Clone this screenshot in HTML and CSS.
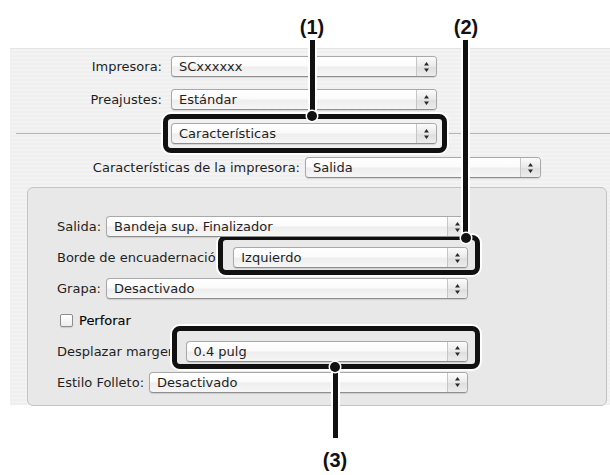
FILE: index.html
```html
<!DOCTYPE html>
<html lang="es">
<head>
    <meta charset="UTF-8">
    <meta name="viewport" content="width=device-width, initial-scale=1.0">
    <title>Características de la impresora</title>
    <link rel="stylesheet" href="styles.css">
</head>
<body>
    <div class="page">
        <div class="sheet">
            <div class="top-form">
                <span class="label">Impresora:</span>
                <div class="popup">
                    <span class="popup-value">SCxxxxxx</span>
                    <span class="stepper"><svg width="7" height="12" viewBox="0 0 7 12"><path d="M1 4.5h5L3.5 1z M1 7.5h5L3.5 11z"/></svg></span>
                </div>

                <span class="label">Preajustes:</span>
                <div class="popup">
                    <span class="popup-value">Estándar</span>
                    <span class="stepper"><svg width="7" height="12" viewBox="0 0 7 12"><path d="M1 4.5h5L3.5 1z M1 7.5h5L3.5 11z"/></svg></span>
                </div>
            </div>

            <div class="divider-row">
                <div class="popup popup-pane">
                    <span class="popup-value">Características</span>
                    <span class="stepper"><svg width="7" height="12" viewBox="0 0 7 12"><path d="M1 4.5h5L3.5 1z M1 7.5h5L3.5 11z"/></svg></span>
                </div>
            </div>

            <div class="feature-row">
                <span class="label">Características de la impresora:</span>
                <div class="popup popup-feature">
                    <span class="popup-value">Salida</span>
                    <span class="stepper"><svg width="7" height="12" viewBox="0 0 7 12"><path d="M1 4.5h5L3.5 1z M1 7.5h5L3.5 11z"/></svg></span>
                </div>
            </div>

            <div class="panel">
                <div class="panel-row">
                    <span class="label">Salida:</span>
                    <div class="popup">
                        <span class="popup-value">Bandeja sup. Finalizador</span>
                        <span class="stepper"><svg width="7" height="12" viewBox="0 0 7 12"><path d="M1 4.5h5L3.5 1z M1 7.5h5L3.5 11z"/></svg></span>
                    </div>
                </div>
                <div class="panel-row">
                    <span class="label">Borde de encuadernación:</span>
                    <div class="popup">
                        <span class="popup-value">Izquierdo</span>
                        <span class="stepper"><svg width="7" height="12" viewBox="0 0 7 12"><path d="M1 4.5h5L3.5 1z M1 7.5h5L3.5 11z"/></svg></span>
                    </div>
                </div>
                <div class="panel-row">
                    <span class="label">Grapa:</span>
                    <div class="popup">
                        <span class="popup-value">Desactivado</span>
                        <span class="stepper"><svg width="7" height="12" viewBox="0 0 7 12"><path d="M1 4.5h5L3.5 1z M1 7.5h5L3.5 11z"/></svg></span>
                    </div>
                </div>
                <div class="panel-row">
                    <label class="checkbox-label"><span class="checkbox"></span>Perforar</label>
                </div>
                <div class="panel-row">
                    <span class="label">Desplazar margen:</span>
                    <div class="popup">
                        <span class="popup-value">0.4 pulg</span>
                        <span class="stepper"><svg width="7" height="12" viewBox="0 0 7 12"><path d="M1 4.5h5L3.5 1z M1 7.5h5L3.5 11z"/></svg></span>
                    </div>
                </div>
                <div class="panel-row">
                    <span class="label">Estilo Folleto:</span>
                    <div class="popup">
                        <span class="popup-value">Desactivado</span>
                        <span class="stepper"><svg width="7" height="12" viewBox="0 0 7 12"><path d="M1 4.5h5L3.5 1z M1 7.5h5L3.5 11z"/></svg></span>
                    </div>
                </div>
            </div>
        </div>

        <!-- callouts drawn over the dialog -->
        <span class="callout-label label-1">(1)</span>
        <span class="callout-label label-2">(2)</span>
        <span class="callout-label label-3">(3)</span>

        <div class="callout-box box-1"></div>
        <div class="callout-box box-2"></div>
        <div class="callout-box box-3"></div>

        <div class="leader leader-1"></div>
        <div class="leader leader-2"></div>
        <div class="leader leader-3"></div>

        <div class="dot dot-1"></div>
        <div class="dot dot-2"></div>
        <div class="dot dot-3"></div>
    </div>
</body>
</html>
```

FILE: styles.css
```css
/* Print dialog, Mac OS X look */
body {
    margin: 0;
    background-color: #fff;
    font-family: "DejaVu Sans", Verdana, sans-serif;
    font-size: 13px;
    color: #1f1f1f;
}

.page {
    position: relative;
    width: 610px;
    height: 475px;
    overflow: hidden;
}

.sheet {
    box-sizing: border-box;
    height: 357px;
    margin: 48px 0 0 10px;
    padding-top: 7px;
    border-top: 1px solid #e4e4e4;
    background: repeating-linear-gradient(#f3f3f3 0 2px, #efefef 2px 4px);
}

.label {
    white-space: nowrap;
    line-height: 21px;
}

/* pop-up buttons */
.popup {
    position: relative;
    z-index: 2;
    display: flex;
    align-items: center;
    height: 21px;
    box-sizing: border-box;
    border: 1px solid #a9a9a9;
    border-bottom-color: #8e8e8e;
    border-radius: 4px;
    background: linear-gradient(#ffffff, #fbfbfb 45%, #eeeeee 55%, #f6f6f6);
    box-shadow: 0 1px 1px rgba(0, 0, 0, 0.12);
}

.popup-value {
    flex: 1;
    padding-left: 7px;
    white-space: nowrap;
    line-height: 19px;
}

.stepper {
    display: flex;
    align-items: center;
    justify-content: center;
    align-self: stretch;
    width: 19px;
    border-left: 1px solid #c6c6c6;
    border-radius: 0 3px 3px 0;
    background: linear-gradient(#fbfbfb, #e9e9e9 50%, #dedede 51%, #ececec);
}

.stepper svg {
    fill: #2a2a2a;
}

/* top part */
.top-form {
    display: grid;
    grid-template-columns: 152px 266px;
    column-gap: 9px;
    row-gap: 12px;
}

.top-form .label {
    text-align: right;
}

.divider-row {
    margin: 13px 0 0 6px;
    padding-left: 155px;
    background: linear-gradient(#b4b4b4, #b4b4b4) 0 50% / 100% 1px no-repeat;
}

.popup-pane {
    width: 266px;
}

.feature-row {
    display: flex;
    justify-content: flex-end;
    gap: 5px;
    width: 531px;
    margin-top: 13px;
}

.popup-feature {
    width: 236px;
}

/* inner box */
.panel {
    box-sizing: border-box;
    height: 219px;
    margin: 9px 3px 0 17px;
    padding: 28px 0 0 29px;
    border: 1px solid #c4c4c4;
    border-radius: 6px;
    background-color: #e8e8e8;
    display: flex;
    flex-direction: column;
    gap: 10.2px;
}

.panel-row {
    display: flex;
    align-items: center;
    gap: 5px;
    width: 411px;
    height: 21px;
}

.panel-row .popup {
    flex: 1;
}

.checkbox-label {
    display: flex;
    align-items: center;
    gap: 6px;
    margin-left: 3px;
    color: #000;
    -webkit-text-stroke: 0.1px #000;
}

.checkbox {
    width: 13px;
    height: 13px;
    box-sizing: border-box;
    border: 1px solid #8d8d8d;
    border-radius: 2px;
    background: linear-gradient(#ffffff, #ededed);
    box-shadow: 0 1px 1px rgba(0, 0, 0, 0.12);
}

/* callouts */
.callout-label {
    position: absolute;
    z-index: 5;
    transform: translateX(-50%);
    font-family: "Liberation Sans", Arial, sans-serif;
    font-weight: bold;
    font-size: 20px;
    line-height: 22px;
    color: #111;
}

.label-1 { left: 312px; top: 16px; }
.label-2 { left: 466px; top: 16px; }
.label-3 { left: 335px; top: 449px; }

.callout-box {
    position: absolute;
    z-index: 1;
    box-sizing: border-box;
    border: 5px solid #111;
    border-radius: 8px;
    box-shadow: 0 0 0 2px #fff;
}

.box-1 { left: 163px; top: 114px; width: 284px; height: 39px; background-color: #f1f1f1; }
.box-2 { left: 218px; top: 235px; width: 262px; height: 40px; background-color: #e8e8e8; }
.box-3 { left: 172px; top: 326px; width: 308px; height: 43px; background-color: #e8e8e8; }

.leader {
    position: absolute;
    z-index: 3;
    width: 5px;
    background-color: #111;
    box-shadow: 0 0 0 2px #fff;
}

.leader-1 { left: 310px; top: 40px; height: 76px; }
.leader-2 { left: 463px; top: 40px; height: 198px; }
.leader-3 { left: 333px; top: 367px; height: 71px; }

.dot {
    position: absolute;
    z-index: 4;
    width: 10px;
    height: 10px;
    border-radius: 50%;
    background-color: #111;
    box-shadow: 0 0 0 1.5px #fff;
}

.dot-1 { left: 307px; top: 111px; }
.dot-2 { left: 461px; top: 233px; }
.dot-3 { left: 330px; top: 362px; }
```
